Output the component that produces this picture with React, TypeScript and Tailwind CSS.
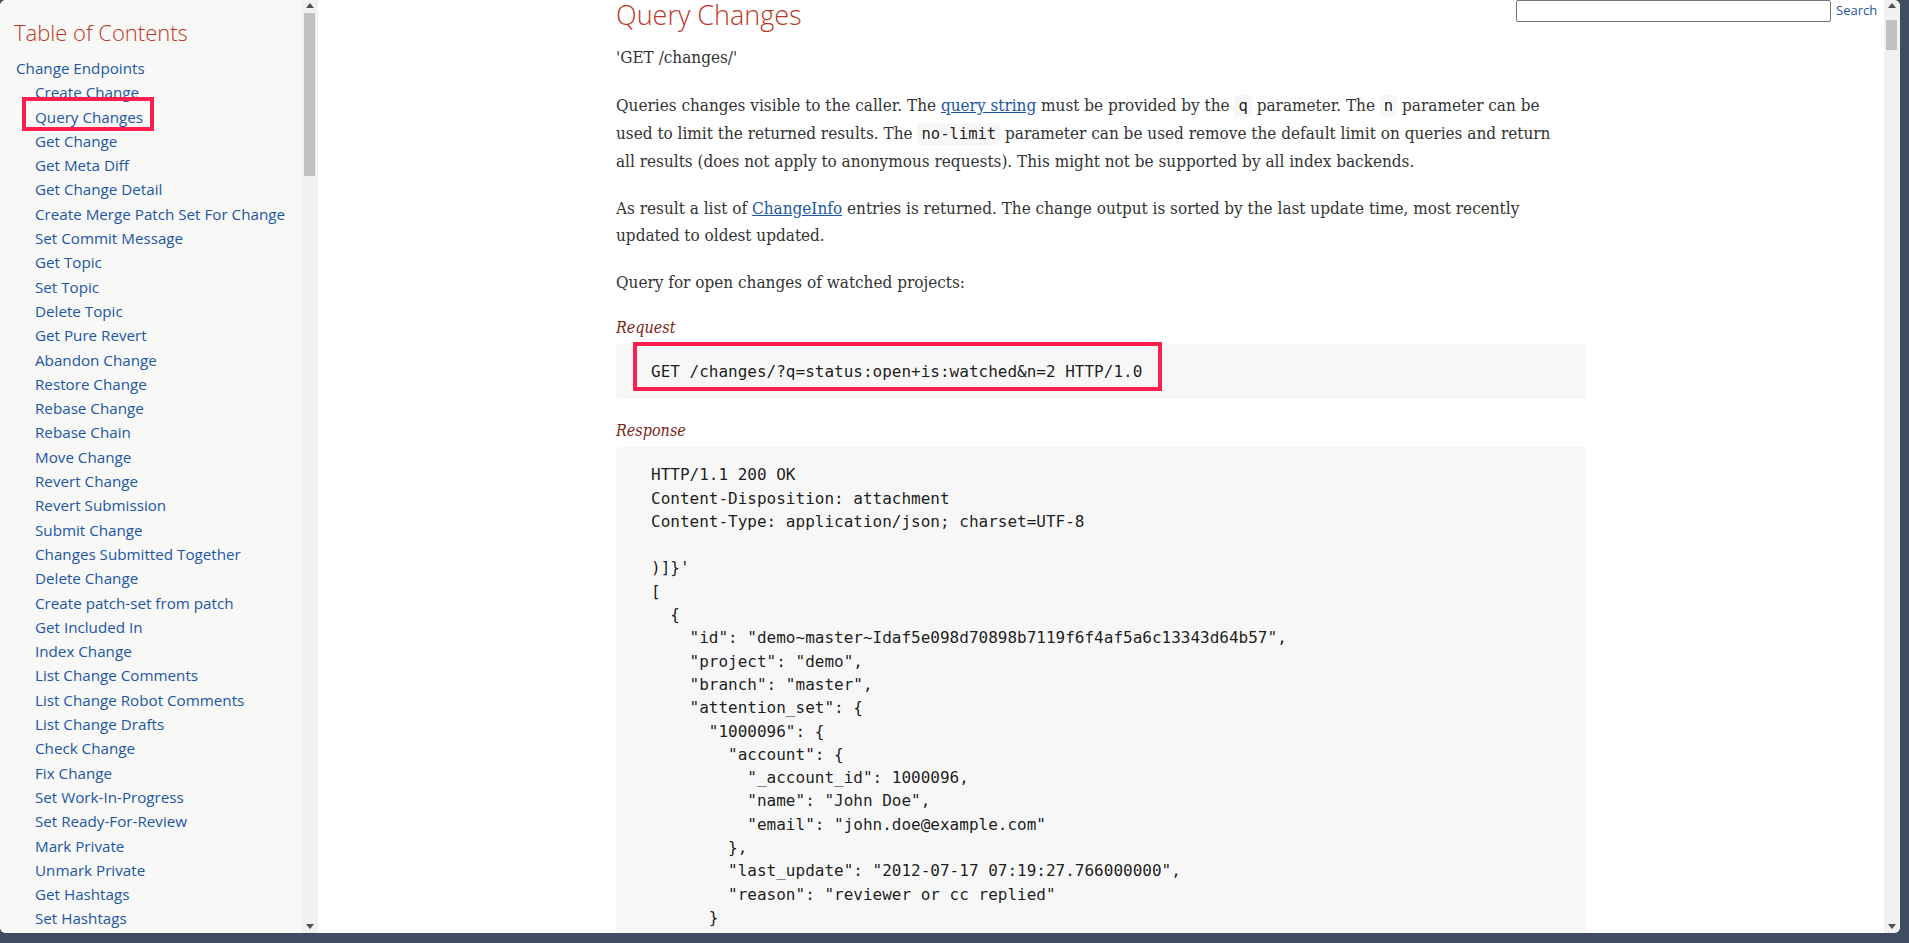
const tocItems = [
  "Create Change",
  "Query Changes",
  "Get Change",
  "Get Meta Diff",
  "Get Change Detail",
  "Create Merge Patch Set For Change",
  "Set Commit Message",
  "Get Topic",
  "Set Topic",
  "Delete Topic",
  "Get Pure Revert",
  "Abandon Change",
  "Restore Change",
  "Rebase Change",
  "Rebase Chain",
  "Move Change",
  "Revert Change",
  "Revert Submission",
  "Submit Change",
  "Changes Submitted Together",
  "Delete Change",
  "Create patch-set from patch",
  "Get Included In",
  "Index Change",
  "List Change Comments",
  "List Change Robot Comments",
  "List Change Drafts",
  "Check Change",
  "Fix Change",
  "Set Work-In-Progress",
  "Set Ready-For-Review",
  "Mark Private",
  "Unmark Private",
  "Get Hashtags",
  "Set Hashtags",
  "Get Messages",
  "Get Message",
];

const response = `HTTP/1.1 200 OK
Content-Disposition: attachment
Content-Type: application/json; charset=UTF-8

)]}'
[
  {
    "id": "demo~master~Idaf5e098d70898b7119f6f4af5a6c13343d64b57",
    "project": "demo",
    "branch": "master",
    "attention_set": {
      "1000096": {
        "account": {
          "_account_id": 1000096,
          "name": "John Doe",
          "email": "john.doe@example.com"
        },
        "last_update": "2012-07-17 07:19:27.766000000",
        "reason": "reviewer or cc replied"
      }
    },
    "change_id": "Idaf5e098d70898b7119f6f4af5a6c13343d64b57",
    "subject": "One change",
    "status": "NEW",`;

function Scrollbar({ thumbTop, thumbHeight }: { thumbTop: number; thumbHeight: number }) {
  return (
    <div className="relative h-full w-[16px] shrink-0 bg-[#f1f1f1]">
      <svg className="absolute left-[4px] top-[3px]" width="8" height="5" viewBox="0 0 8 5">
        <polygon points="0,5 8,5 4,0" fill="#505050" />
      </svg>
      <div
        className="absolute left-[2px] w-[11px] bg-[#c1c1c1]"
        style={{ top: thumbTop, height: thumbHeight }}
      />
      <svg className="absolute bottom-[4px] left-[4px]" width="8" height="5" viewBox="0 0 8 5">
        <polygon points="0,0 8,0 4,5" fill="#505050" />
      </svg>
    </div>
  );
}

function Code({ children }: { children: string }) {
  return (
    <code className="rounded-[4px] bg-[#f7f7f8] px-[4px] py-[2px] font-['DejaVu_Sans_Mono',monospace] text-[15.5px] text-[rgba(0,0,0,0.9)]">
      {children}
    </code>
  );
}

export default function App() {
  return (
    <div className="h-[943px] w-[1909px] overflow-hidden bg-[#3e4d5f]">
      <div className="relative flex h-[933px] w-[1900px] overflow-hidden rounded-[6px] bg-white">
        {/* table of contents */}
        <aside className="flex h-full w-[318px] shrink-0">
          <div className="h-full w-[302px] overflow-hidden bg-[#f8f8f7] pl-[14px] pt-[18px] font-['Open_Sans',sans-serif]">
            <h2 className="text-[22px] font-light leading-[28px] text-[#ba3925]">Table of Contents</h2>
            <ul className="mt-[10px] pl-[2px] text-[15.2px] leading-[24.3px] text-[#2156a5]">
              <li>Change Endpoints</li>
              <ul className="pl-[19px]">
                {tocItems.map((t) => (
                  <li key={t} className="whitespace-nowrap">
                    {t}
                  </li>
                ))}
              </ul>
            </ul>
          </div>
          <Scrollbar thumbTop={13} thumbHeight={163} />
        </aside>

        {/* document */}
        <main className="h-full flex-1 overflow-hidden">
          <div className="mx-auto w-[970px] font-['DejaVu_Serif_Condensed','Liberation_Serif',serif] text-[17px] leading-[27px] text-[#333333]">
            <h2 className="-mt-[3px] font-['Open_Sans',sans-serif] text-[27px] font-light leading-[36px] text-[#ba3925]">
              Query Changes
            </h2>
            <p className="mt-[11px]">'GET /changes/'</p>
            <p className="mt-[21px]">
              Queries changes visible to the caller. The{" "}
              <a className="text-[#2156a5] underline">query string</a> must be provided by the <Code>q</Code>{" "}
              parameter. The <Code>n</Code> parameter can be
              <br />
              used to limit the returned results. The <Code>no-limit</Code> parameter can be used remove the
              default limit on queries and return
              <br />
              all results (does not apply to anonymous requests). This might not be supported by all index
              backends.
            </p>
            <p className="mt-[20px]">
              As result a list of <a className="text-[#2156a5] underline">ChangeInfo</a> entries is returned.
              The change output is sorted by the last update time, most recently
              <br />
              updated to oldest updated.
            </p>
            <p className="mt-[20px]">Query for open changes of watched projects:</p>

            <div className="mt-[20px] text-[16px] italic leading-[24px] text-[#7a2518]">Request</div>
            <pre className="mt-[4px] rounded-[4px] bg-[#f7f7f8] px-[35px] py-[16px] font-['DejaVu_Sans_Mono',monospace] text-[16px] leading-[23.3px] text-[rgba(0,0,0,0.9)]">
              GET /changes/?q=status:open+is:watched&amp;n=2 HTTP/1.0
            </pre>

            <div className="mt-[20px] text-[16px] italic leading-[24px] text-[#7a2518]">Response</div>
            <pre className="mt-[4px] rounded-[4px] bg-[#f7f7f8] px-[35px] py-[16px] font-['DejaVu_Sans_Mono',monospace] text-[16px] leading-[23.3px] text-[rgba(0,0,0,0.9)]">
              {response}
            </pre>
          </div>
        </main>
        <Scrollbar thumbTop={20} thumbHeight={30} />

        {/* search box */}
        <div className="absolute left-[1516px] top-0 flex items-center gap-[5px] font-['Open_Sans',sans-serif]">
          <input className="h-[22px] w-[315px] rounded-[2px] border border-[#767676] bg-white" />
          <span className="text-[13px] text-[#2156a5]">Search</span>
        </div>

        {/* annotation boxes */}
        <div className="absolute left-[22px] top-[97px] h-[34px] w-[132px] border-[4px] border-[#ff1f4f]" />
        <div className="absolute left-[633px] top-[342px] h-[49px] w-[529px] border-[4px] border-[#ff1f4f]" />
      </div>
    </div>
  );
}
